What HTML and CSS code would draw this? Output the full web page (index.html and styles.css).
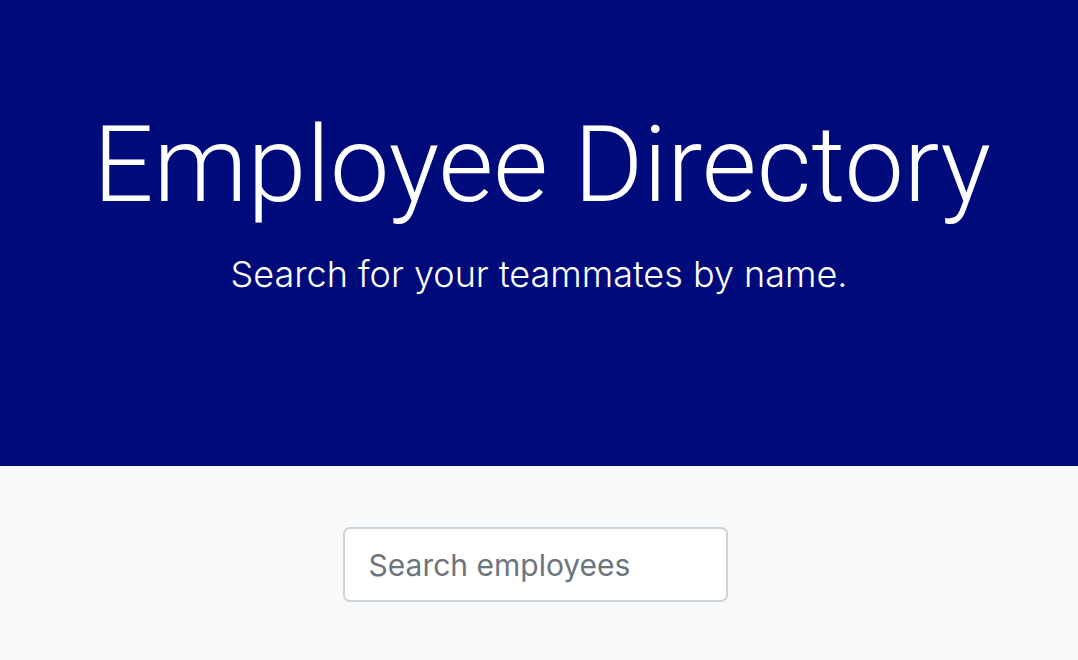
FILE: index.html
```html
<!DOCTYPE html>
<html lang="en">
<head>
<meta charset="utf-8">
<title>Employee Directory</title>
<link rel="stylesheet" href="styles.css">
</head>
<body>
<header class="hero">
  <h1 class="hero-title">Employee Directory</h1>
  <p class="hero-lead">Search for your teammates by name.</p>
</header>
<main class="content">
  <form class="search-form">
    <input class="search-input" type="text" placeholder="Search employees">
  </form>
</main>
</body>
</html>
```
FILE: styles.css
```css
* { box-sizing: border-box; }
html, body { margin: 0; padding: 0; }
body {
  font-family: Inter, "Liberation Sans", sans-serif;
  background: #f8f9fa;
  color: #212529;
}
.hero {
  background: #000b7b;
  color: #fff;
  height: 466px;
  display: flex;
  flex-direction: column;
  align-items: center;
  padding-top: 101px;
}
.hero-title {
  margin: 0 0 0 6px;
  font-family: Roboto, Inter, sans-serif;
  font-weight: 300;
  font-size: 106px;
  line-height: 128px;
  letter-spacing: 0;
}
.hero-lead {
  margin: 21px 0 0;
  font-weight: 300;
  font-size: 36px;
  line-height: 48px;
}
.content {
  display: flex;
  justify-content: center;
  padding-top: 61px;
  padding-right: 8px;
}
.search-form { margin: 0; }
.search-input {
  width: 385px;
  height: 75px;
  padding: 0 24px;
  border: 2px solid #ced4da;
  border-radius: 7px;
  background: #fff;
  font-family: inherit;
  font-size: 30px;
  color: #495057;
  outline: none;
}
.search-input::placeholder { color: #6c757d; }
```
